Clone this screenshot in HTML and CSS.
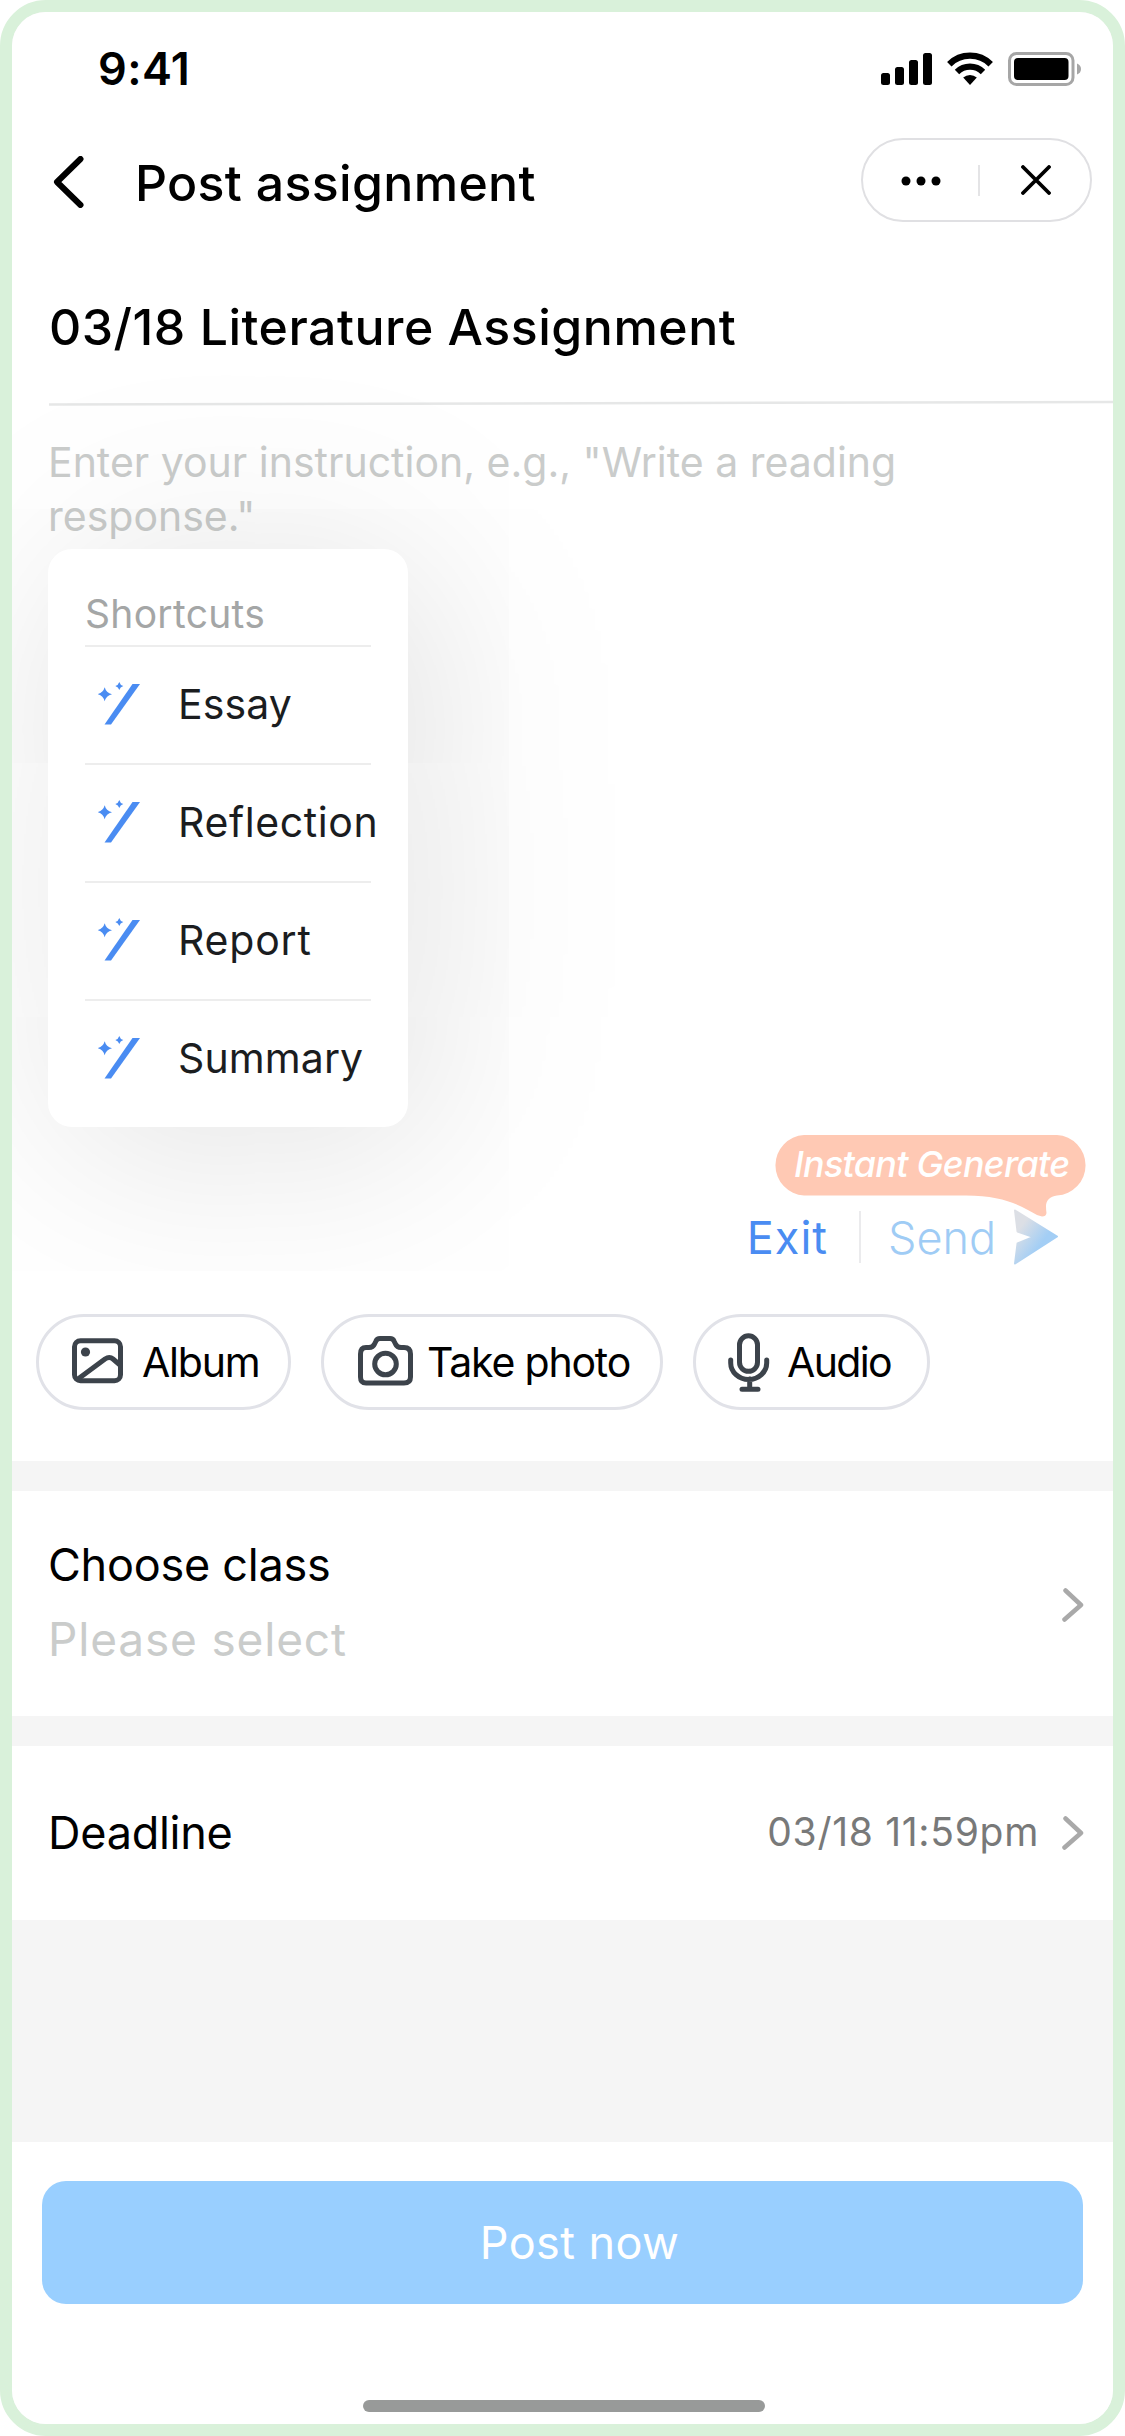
FILE: index.html
```html
<!DOCTYPE html>
<html lang="en">
<head>
<meta charset="utf-8">
<title>Post assignment</title>
<link rel="stylesheet" href="styles.css">
</head>
<body>
<svg class="defs" aria-hidden="true">
  <symbol id="wand" viewBox="0 0 44 44">
    <path d="M6.500 42.500H13L42 2H34.500Z"/>
    <path d="M6.700 5.200q1.300 5.300 7.300 7q-6 1.500-7.300 7q-1.500-5.500-7-7q5.500-1.700 7-7z"/>
    <path d="M21.300 0q.8 3.100 4 4q-3.200.9-4 4q-.9-3.100-4-4q3.100-.9 4-4z"/>
  </symbol>
</svg>
<main class="phone">
  <header class="status">
    <span class="status-time">9:41</span>
    <svg class="status-icons" viewBox="0 0 200 34">
      <rect x="0" y="21" width="9" height="12" rx="2.500"/>
      <rect x="14" y="15" width="9" height="18" rx="2.500"/>
      <rect x="28" y="8" width="9" height="25" rx="2.500"/>
      <rect x="42" y="1" width="9" height="32" rx="2.500"/>
      <g fill="none" stroke="#000" stroke-width="6.300">
        <path d="M68.300 12.200a29.400 29.400 0 0 1 41.400 0"/>
        <path d="M76 20a18.500 18.500 0 0 1 26 0"/>
      </g>
      <path d="M82.200 25.600a10.500 10.500 0 0 1 13.600 0L89 33Z"/>
      <rect x="128.500" y="1.500" width="63.500" height="31" rx="7" fill="none" stroke="#a6a6a6" stroke-width="3"/>
      <rect x="133" y="6" width="54.500" height="22" rx="4"/>
      <path d="M196 11.500q4 1.500 4 5.500t-4 5.500z" fill="#a6a6a6"/>
    </svg>
  </header>

  <nav class="nav">
    <svg class="back" viewBox="0 0 32 52"><path d="M27.500 3 4 26l23.500 23"/></svg>
    <h1 class="nav-title">Post assignment</h1>
    <div class="capsule">
      <svg class="dots" viewBox="0 0 40 10"><circle cx="5" cy="5" r="4.500"/><circle cx="20" cy="5" r="4.500"/><circle cx="35" cy="5" r="4.500"/></svg>
      <span class="capsule-line"></span>
      <svg class="close" viewBox="0 0 30 30"><path d="M2 2l26 26M28 2 2 28"/></svg>
    </div>
  </nav>

  <section class="heading">
    <h2 class="heading-text">03/18 Literature Assignment</h2>
    <svg class="heading-rule" viewBox="0 0 1065 6" preserveAspectRatio="none"><path d="M0 4.500 1065 2"/></svg>
  </section>

  <section class="editor">
    <p class="placeholder">Enter your instruction, e.g., "Write a reading<br>response."</p>
    <div class="shortcuts">
      <div class="shortcuts-title">Shortcuts</div>
      <div class="shortcut"><svg class="wand"><use href="#wand"/></svg><span>Essay</span></div>
      <div class="shortcut reflection"><svg class="wand"><use href="#wand"/></svg><span>Reflection</span></div>
      <div class="shortcut report"><svg class="wand"><use href="#wand"/></svg><span>Report</span></div>
      <div class="shortcut"><svg class="wand"><use href="#wand"/></svg><span>Summary</span></div>
    </div>
    <div class="actions">
      <span class="exit">Exit</span>
      <span class="actions-line"></span>
      <span class="send">Send</span>
      <svg class="plane" viewBox="0 0 46 56">
        <defs><linearGradient id="pg" x1="0" y1=".1" x2=".7" y2=".75"><stop offset=".25" stop-color="#dcdfe5"/><stop offset=".85" stop-color="#a3cef5"/></linearGradient></defs>
        <path d="M2 1.500 44 27.500 2 54.500 4.500 34.500 20.500 28 4.500 22.500Z" fill="url(#pg)" stroke="url(#pg)" stroke-width="2" stroke-linejoin="round"/>
      </svg>
      <div class="tip">
        <svg class="tip-shape" viewBox="0 0 313 82"><path d="M30 0H283A30.300 30.300 0 0 1 283 60.500C276 61 272 66 272 71Q272 75 272.500 78Q272 81.500 268 81.500L263 80C246 70 228 60.500 192 60.500H30A30.300 30.300 0 0 1 30 0Z"/></svg>
        <span class="tip-text">Instant Generate</span>
      </div>
    </div>
  </section>

  <section class="chips">
    <div class="chip album">
      <svg class="chip-icon" width="51" height="46" viewBox="0 0 51 46"><rect x="2.500" y="2.700" width="46" height="40" rx="6"/><path d="M6 41 33 21q4.500-3 8 0l7 6"/><circle class="solid" cx="13.500" cy="14" r="4.600"/></svg>
      <span>Album</span>
    </div>
    <div class="chip photo">
      <svg class="chip-icon" width="55" height="50" viewBox="0 0 55 50"><path d="M8 11.500h3q4 0 5.500-3.500l1.500-3q1-2.500 4-2.500h10q3 0 4 2.500l1.500 3q1.500 3.500 5.500 3.500h3q6.500 0 6.500 6.500v23q0 6-6.500 6h-38q-5.500 0-5.500-6v-23q0-6.500 5.500-6.500z"/><circle cx="27.500" cy="28" r="10.800"/></svg>
      <span>Take photo</span>
    </div>
    <div class="chip audio">
      <svg class="chip-icon" width="42" height="60" viewBox="0 0 42 60"><rect x="11.500" y="2.800" width="18" height="35.500" rx="9"/><path d="M2.700 27v3a18 16.500 0 0 0 36 0v-3M21.700 46v10M14 56.200h16"/></svg>
      <span>Audio</span>
    </div>
  </section>

  <section class="row class-row">
    <div class="class-text">
      <div class="label">Choose class</div>
      <div class="hint">Please select</div>
    </div>
    <svg class="chevron" viewBox="0 0 22 34"><path d="M3.500 2.500 19 17 2.500 31.500"/></svg>
  </section>

  <section class="row deadline-row">
    <span class="label deadline">Deadline</span>
    <span class="date">03/18 11:59pm</span>
    <svg class="chevron" viewBox="0 0 22 34"><path d="M3.500 2.500 19 17 2.500 31.500"/></svg>
  </section>

  <footer class="footer">
    <div class="post">Post now</div>
    <div class="home"></div>
  </footer>
</main>
</body>
</html>
```
FILE: styles.css
```css
* { box-sizing: border-box; }

body {
  margin: 0;
  background: #fff;
  color: #000;
  font-family: Inter, "Liberation Sans", sans-serif;
}

h1, h2, p { margin: 0; }
svg { display: block; flex: none; }
.defs { display: none; }

.phone {
  display: flex;
  flex-direction: column;
  width: 1125px;
  height: 2436px;
  border: 12px solid #d9f1da;
  border-radius: 46px;
  background: #f5f5f5;
  overflow: hidden;
}

/* status bar */
.status {
  display: flex;
  align-items: center;
  justify-content: space-between;
  height: 112px;
  padding: 0 32px 0 86px;
  background: #fff;
}
.status-time { font-size: 45px; font-weight: 600; letter-spacing: .4px; }
.status-icons { width: 200px; height: 34px; margin-top: 2px; }

/* navigation */
.nav {
  display: flex;
  align-items: center;
  height: 112px;
  padding: 0 21px 0 41px;
  background: #fff;
}
.back { width: 32px; height: 52px; margin-top: 3px; }
.back path, .close path, .chevron path {
  fill: none;
  stroke: #000;
  stroke-width: 6px;
  stroke-linecap: round;
  stroke-linejoin: round;
}
.nav-title {
  margin: 6px auto 0 50px;
  font-size: 50px;
  font-weight: 500;
  letter-spacing: .32px;
}
.capsule {
  display: flex;
  align-items: center;
  width: 231px;
  height: 84px;
  padding-left: 38px;
  border: 2px solid #e0e0e3;
  border-radius: 42px;
}
.dots { width: 40px; height: 10px; margin-top: 2px; }
.capsule-line { width: 2px; height: 31px; margin: 0 41px 0 37px; background: #e4e4e6; }
.close { width: 30px; height: 30px; }
.close path { stroke-width: 3.800px; }

/* assignment title */
.heading { height: 170px; padding: 61px 0 0 37px; background: #fff; }
.heading-text {
  font-size: 50px;
  font-weight: 500;
  line-height: 61px;
  letter-spacing: .5px;
}
.heading-rule { width: 1065px; height: 6px; margin-top: 42px; }
.heading-rule path { stroke: #e6e7e7; stroke-width: 2.500px; }

/* editor */
.editor {
  position: relative;
  display: flex;
  flex-direction: column;
  justify-content: space-between;
  height: 908px;
  padding: 29px 54px 49px 36px;
  background: #fff;
}
.placeholder {
  color: #cacccb;
  font-size: 41px;
  line-height: 54px;
}

.shortcuts {
  position: absolute;
  top: 143px;
  left: 36px;
  width: 360px;
  height: 578px;
  padding: 32px 37px 0;
  border-radius: 24px;
  background: #fff;
  box-shadow: 20px 15px 215px rgba(0, 0, 0, .13);
}
.shortcuts-title {
  height: 64px;
  color: #a4a6a6;
  font-size: 39px;
  line-height: 66px;
  letter-spacing: .3px;
}
.shortcut {
  display: flex;
  align-items: center;
  height: 118px;
  padding: 0 0 3px 13px;
  border-top: 2px solid #ededed;
  color: #1b1d1f;
  font-size: 41px;
  letter-spacing: .1px;
  white-space: nowrap;
}
.reflection { letter-spacing: .6px; }
.report { letter-spacing: .8px; }
.wand { width: 44px; height: 44px; margin-right: 36px; fill: #4a8cf2; overflow: visible; }

.actions {
  position: relative;
  display: flex;
  align-items: center;
  align-self: flex-end;
  height: 56px;
  font-size: 45px;
}
.exit { color: #4a8cf2; letter-spacing: 1px; }
.actions-line { width: 2px; height: 52px; margin: 0 27px 0 31px; background: #ebebed; }
.send { width: 125px; color: #9fccf5; font-weight: 300; }
.plane { width: 46px; height: 56px; }

.tip { position: absolute; top: -74px; right: -28px; width: 313px; height: 82px; }
.tip-shape { position: absolute; width: 313px; height: 82px; fill: #ffc9b4; }
.tip-text {
  position: relative;
  display: block;
  padding-left: 20px;
  color: #fff;
  font-size: 36px;
  font-style: italic;
  font-weight: 500;
  line-height: 59px;
  letter-spacing: -.75px;
  white-space: nowrap;
}

/* attachments */
.chips {
  display: flex;
  height: 147px;
  padding-left: 24px;
  background: #fff;
}
.chip {
  display: flex;
  align-items: center;
  height: 96px;
  border: 3px solid #e1e2e8;
  border-radius: 48px;
  font-size: 41px;
  letter-spacing: -1.200px;
  white-space: nowrap;
}
.chip-icon { fill: none; stroke: #3c434b; stroke-width: 5px; stroke-linecap: round; stroke-linejoin: round; }
.chip-icon .solid { fill: #3c434b; stroke: none; }
.album { width: 255px; padding-left: 33px; margin-right: 30px; }
.album .chip-icon { margin: -3px 19px 0 0; }
.photo { width: 342px; padding-left: 34px; margin-right: 30px; }
.photo .chip-icon { margin: -3px 14px 0 0; }
.audio { width: 237px; padding-left: 32px; letter-spacing: -1.640px; }
.audio .chip-icon { margin: 2px 17px 0 0; }

/* settings rows */
.row {
  display: flex;
  align-items: center;
  margin-top: 30px;
  padding: 0 29px 0 36px;
  background: #fff;
}
.class-row { height: 225px; }
.class-text { margin: 0 auto 3px 0; line-height: 74px; }
.label { font-size: 45px; letter-spacing: -.25px; }
.hint { color: #cacccb; font-size: 46px; letter-spacing: .83px; }
.class-row .chevron { margin-top: 2px; }
.deadline-row { height: 174px; }
.deadline { margin: 0 auto 2px 0; }
.date { margin: 0 23px 3px 0; color: #787979; font-size: 39px; letter-spacing: .7px; }
.chevron { width: 22px; height: 34px; }
.chevron path { stroke: #a9a9a9; stroke-width: 4.500px; }

/* footer */
.footer { height: 282px; margin-top: auto; padding: 39px 30px 0; background: #fff; }
.post {
  height: 123px;
  border-radius: 24px;
  background: #99cfff;
  color: #fff;
  font-size: 45px;
  letter-spacing: .4px;
  line-height: 124px;
  text-align: center;
  text-indent: 34px;
}
.home { width: 402px; height: 12px; margin: 96px 0 0 321px; border-radius: 6px; background: #989a99; }
```
